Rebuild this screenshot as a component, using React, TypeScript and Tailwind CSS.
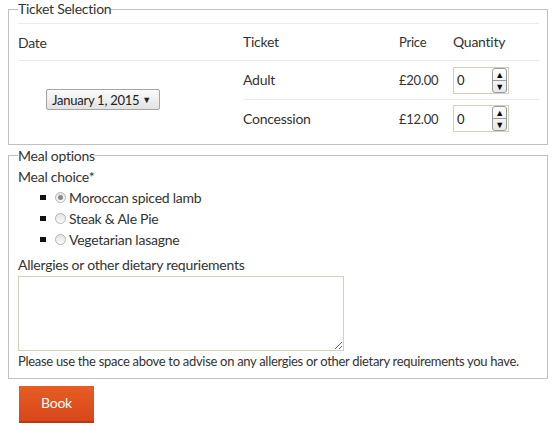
function Radio({ checked }: { checked?: boolean }) {
  return (
    <span className="mr-[3px] inline-flex h-[11px] w-[11px] items-center justify-center rounded-full border border-[#b5b5b5] bg-gradient-to-b from-[#e4e4e4] to-[#fafafa]">
      {checked && <span className="h-[5px] w-[5px] rounded-full bg-[#8a8a8a]" />}
    </span>
  );
}

function Qty() {
  return (
    <div className="flex h-[27px] w-[56px] items-center justify-between border border-[#d3d0bd] bg-white pl-[3px] pr-[1px]">
      <span className="text-[13px] text-[#222]">0</span>
      <div className="flex h-[25px] w-[15px] flex-col overflow-hidden rounded-[3px] border border-[#9a9a9a] bg-gradient-to-b from-white to-[#e8e8e8]">
        <div className="flex flex-1 items-center justify-center border-b border-[#9a9a9a] text-[9px] leading-none text-black">▲</div>
        <div className="flex flex-1 items-center justify-center text-[9px] leading-none text-black">▼</div>
      </div>
    </div>
  );
}

export default function App() {
  const meals = ['Moroccan spiced lamb', 'Steak & Ale Pie', 'Vegetarian lasagne'];
  return (
    <div className="px-2 font-['Lato',sans-serif] text-[14px] leading-[18px] tracking-[-0.25px] text-[#333]">
      <fieldset className="border border-[#c0c0c0] pb-[6px] pl-[9px] pr-[8px]">
        <legend className="px-0">Ticket Selection</legend>
        <table className="mt-[5px] w-full border-collapse">
          <tbody>
            <tr className="h-[37px] border-t border-[#ebebeb]">
              <td className="w-[225px] pt-[1px]">Date</td>
              <td className="w-[156px]">Ticket</td>
              <td className="w-[54px] text-[13px]">Price</td>
              <td>Quantity</td>
            </tr>
            <tr className="h-[39px] border-t border-[#ebebeb]">
              <td rowSpan={2} className="pl-[28px] align-middle">
                <div className="mt-[1px] inline-flex h-[21px] w-[114px] items-center justify-between whitespace-nowrap rounded-[2px] border border-[#a5a5a5] bg-gradient-to-b from-[#fbfbfb] to-[#e2e2e2] pl-[5px] pr-[8px] text-[13px] text-[#222]">
                  <span>January 1, 2015</span>
                  <span className="text-[9px]">▼</span>
                </div>
              </td>
              <td>Adult</td>
              <td className="text-[13px]">£20.00</td>
              <td><Qty /></td>
            </tr>
            <tr className="h-[38px] border-t border-[#ebebeb]">
              <td>Concession</td>
              <td className="text-[13px]">£12.00</td>
              <td><Qty /></td>
            </tr>
          </tbody>
        </table>
      </fieldset>

      <fieldset className="mt-[2px] border border-[#c0c0c0] pb-[8px] pl-[9px] pr-[8px]">
        <legend className="px-0">Meal options</legend>
        <div className="mt-[1px] leading-[21px]">Meal choice*</div>
        <ul className="leading-[21px]">
          {meals.map((m, i) => (
            <li key={m} className="flex items-center pl-[22px]">
              <span className="mr-[9px] h-[5px] w-[6px] bg-[#111]" />
              <Radio checked={i === 0} />
              <span>{m}</span>
            </li>
          ))}
        </ul>
        <div className="mt-[4px] leading-[21px]">Allergies or other dietary requriements</div>
        <textarea className="mt-[1px] block h-[75px] w-[326px] border border-[#d3d0bd] bg-white" />
        <p className="mt-[1px] whitespace-nowrap text-[13px] leading-[18px] tracking-[-0.3px]">
          Please use the space above to advise on any allergies or other dietary requirements you have.
        </p>
      </fieldset>

      <button className="ml-[11px] mt-[7px] h-[37px] w-[75px] border-b-2 border-[#b7370f] bg-gradient-to-b from-[#e55d24] to-[#d8461a] text-[14px] text-white">
        Book
      </button>
    </div>
  );
}
